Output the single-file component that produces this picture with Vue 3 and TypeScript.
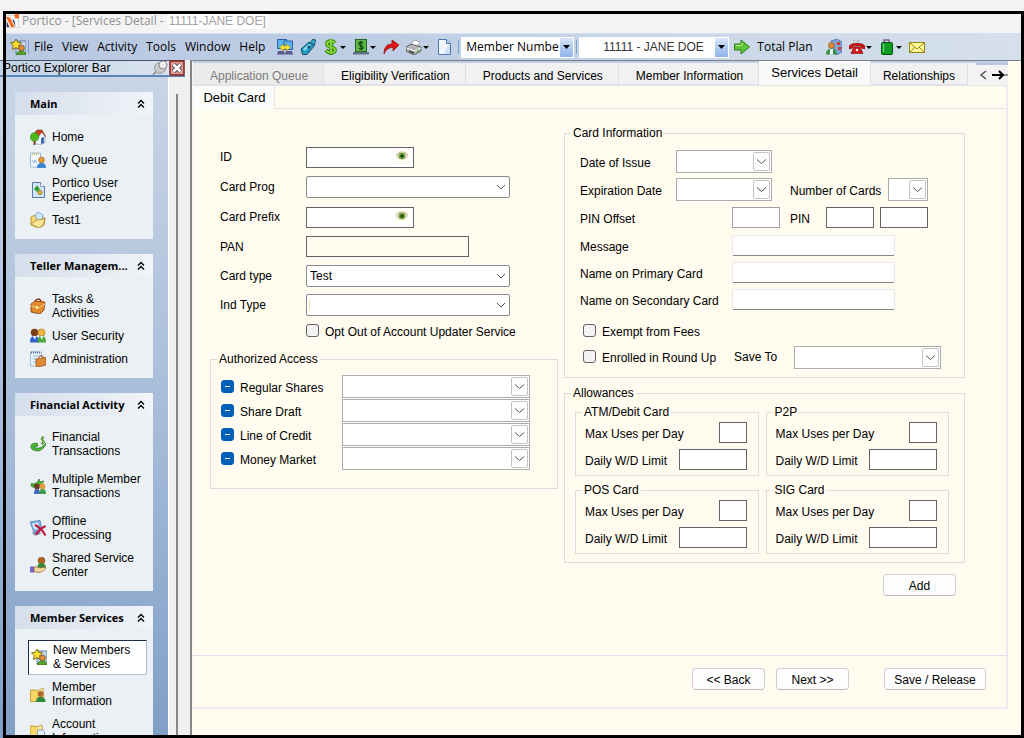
<script setup lang="ts">
import { ref } from 'vue'

interface NavItem {
  label: string
  icon: string
  active?: boolean
}
interface NavGroup {
  title: string
  items: NavItem[]
  roomy?: boolean
}

const icons: Record<string, string> = {
  app: '<rect x="1" y="2" width="14" height="14" fill="#fff" stroke="#ccc"/><path d="M1 3l5 1 5 11H7z" fill="#f26b21"/><path d="M2 15V8l3 7zM8 5l3 3 1 7z" fill="#20365e"/><rect x="11" width="5" height="5" fill="#f26b21"/>',
  star: '<path d="M7 2h9v13H6V9z" fill="#c3dcf3" stroke="#5f7a9f"/><path d="M6 0l1.700 3.300 3.800.500-2.700 2.700.600 4L6 8.600 2.600 10.500l.6-4L.5 3.800l3.800-.5z" fill="#ffe02e" stroke="#6f5d0b" stroke-width=".9"/><circle cx="11.500" cy="9" r="2.900" fill="#e08c3c" stroke="#6a4318" stroke-width=".7"/><path d="M6.500 16c0-3 2.500-4 5-4s4.500 1 4.500 4z" fill="#58a52c" stroke="#2c6414" stroke-width=".7"/>',
  screens: '<rect x=".5" y=".5" width="9" height="9" fill="#58b4f0" stroke="#2d62a5"/><rect x="7" y="2" width="8.500" height="8.500" fill="#58b4f0" stroke="#2d62a5"/><path d="M1 12h6l1 3.500H0zM9 12h6l1 3.500H8z" fill="#565a8c"/><path d="M2.500 8.500l4-3.500v2h3V5l4 3.500-4 3.500v-2h-3v2z" fill="#ffe138" stroke="#a48a14" stroke-width=".6"/>',
  tag: '<path d="M1 10l8-7 5.500 3.500L7 15.500H2.500z" fill="#239ac0" stroke="#10516d"/><path d="M3 10l6-5 2 1-6 6z" fill="#8ad8ee"/><path d="M10 4l3-4 2.500 1-1 5z" fill="#3aa8c8" stroke="#14536c"/><circle cx="9" cy="8" r="1.500" fill="#154e66"/>',
  dollar: '<path d="M12 4C9 1 4 2 4 5c0 4 8 2 8 6 0 3-6 4-9 0M8 0v16" fill="none" stroke="#3b8815" stroke-width="3.800"/><path d="M12 4C9 1 4 2 4 5c0 4 8 2 8 6 0 3-6 4-9 0M8 0v15" fill="none" stroke="#86d63c" stroke-width="1.800"/>',
  cash: '<rect x="2.500" y=".5" width="11" height="12" fill="#5eb746" stroke="#236522"/><path d="M0 13h16v2.500H0z" fill="#5d7480"/><path d="M10 4C8.500 2.500 6 3 6 5s4 1.500 4 3.500S7 10.500 5.800 9M8 2v9" fill="none" stroke="#0c3d0e" stroke-width="1.200"/>',
  redo: '<path d="M1 15C1 8 4 5 9 5V1l7 5-6 6V8.500C6 8.500 3 10 1 15z" fill="#e01616" stroke="#8c0b0b" stroke-width=".7"/>',
  printer: '<path d="M5 6l3-5 6 2-3 5z" fill="#fff" stroke="#888" stroke-width=".7"/><path d="M0 8l5-3 10 3v4l-7 4-8-4z" fill="#b5b5b5" stroke="#484848" stroke-width=".8"/><path d="M1 9l7 3 7-3" fill="none" stroke="#fff"/><path d="M3 11l5 2v2l-5-2z" fill="#4c4c4c"/><circle cx="12" cy="11.500" r="1" fill="#4fbf39"/>',
  page: '<path d="M2.500.5h8l4 4v11h-12z" fill="#f1f7ff" stroke="#4f77b5"/><path d="M10.500.5v4h4" fill="#bdd3f0" stroke="#4f77b5"/><path d="M12 6h2v9H8z" fill="#cfe0f7"/>',
  go: '<path d="M.5 5H7V1l8.500 7L7 15v-4H.5z" fill="#5cc534" stroke="#2c7d18"/><path d="M2 6.500h6V4" fill="none" stroke="#b6ec93"/>',
  people: '<path d="M5 2l6-2 5 3v10l-5 3-5-2z" fill="#7fa6d8" stroke="#47658e" stroke-width=".7"/><path d="M11 3h3v3h-3zM12 8h3v3h-3z" fill="#d33a2b"/><circle cx="5.500" cy="6.500" r="3" fill="#dc8a3a" stroke="#7b4c1a" stroke-width=".6"/><path d="M0 15.500c0-4 2-6 5.500-6s5.500 2 5.500 6z" fill="#3f8f45"/><path d="M4 10h3v5.500H4z" fill="#e8f2ff"/>',
  phone: '<path d="M0 8c0-5 16-5 16 0v2l-4-1V7H4v2l-4 1z" fill="#d31616" stroke="#7d0909" stroke-width=".6"/><path d="M5 8h6l3 6.500H2z" fill="#d31616" stroke="#7d0909" stroke-width=".6"/><circle cx="8" cy="11" r="1.300" fill="#fff"/><path d="M4 2l2-1M8 2l2-1" stroke="#999"/>',
  bag: '<path d="M5 4V1h5v3" fill="none" stroke="#7c5a86" stroke-width="1.500"/><rect x="2.500" y="3.500" width="11" height="12" rx="1" fill="#0d9b20" stroke="#07510f"/><path d="M4.500 5v8" stroke="#5bd068" stroke-width="1.500"/>',
  mail: '<rect x=".5" y="3.500" width="15" height="10" fill="#fff799" stroke="#96880c"/><path d="M1 4l7 6 7-6M1 13l5-5M15 13l-5-5" fill="none" stroke="#96880c"/>',
  home: '<path d="M4 8l6-7 5 6v7l-6 2-4-2z" fill="#eef4fb" stroke="#8391a8" stroke-width=".6"/><path d="M3 6l4-5h5l4 7-4-5-4 5z" fill="#c8431e" stroke="#762510" stroke-width=".5"/><path d="M11 9l3-1v6l-3 1z" fill="#3d6fc0"/><circle cx="4.500" cy="8" r="4.300" fill="#4fb81d" stroke="#2c7a10" stroke-width=".6"/><path d="M3.500 12h2v4h-2z" fill="#7a4c1c"/>',
  queue: '<path d="M.5 1h10v14H.5z" fill="#f3f8ff" stroke="#90a9cc" stroke-width=".8"/><path d="M2 2h8" stroke="#d6c16c" stroke-width="2" stroke-dasharray="1 1"/><path d="M2 8l2 3 1-3 2 3" fill="none" stroke="#8bb3e0"/><circle cx="11.500" cy="8" r="3" fill="#e59a3a" stroke="#9b5f17" stroke-width=".5"/><path d="M7 16c0-4 2-5 4.500-5s4.500 1 4.500 5z" fill="#3e86d4"/>',
  portal: '<path d="M2.500.5h8l4 4v11h-12z" fill="#d5e6fa" stroke="#5778a8"/><path d="M10.500.5v4h4" fill="#fff" stroke="#5778a8" stroke-width=".7"/><path d="M4 7l3-3.500 3 3.500-3 3z" fill="#2f9e2a"/><circle cx="10" cy="10.500" r="2.200" fill="#d7b13a" stroke="#7e6316" stroke-width=".6"/>',
  folder: '<path d="M1 5l4-2 1 2 9 1-1 7-5 3-8-3z" fill="#f8d873" stroke="#a9831c" stroke-width=".8"/><path d="M5 4l3-4 5 3-1 5-4 2z" fill="#cfe5f8" stroke="#678fb8" stroke-width=".7"/><path d="M1 12l6-4 8-1-2 6-4 3z" fill="#fbe79a" stroke="#a9831c" stroke-width=".7"/>',
  briefcase: '<path d="M5 5c0-5 6-5 6-1" fill="none" stroke="#8b2f15" stroke-width="1.500"/><path d="M1 6l4-3 10 1-1 8-4 4-9-2z" fill="#e08a2c" stroke="#7d3d0e" stroke-width=".8"/><path d="M1 8l8 2 6-4" fill="none" stroke="#fbd08a"/><path d="M6 8h2v3H6z" fill="#ffe9a8"/>',
  users: '<circle cx="4.500" cy="4.500" r="3.700" fill="#7a3d16"/><path d="M0 14.500c0-5 2-6.500 4.500-6.500S9 9.500 9 14.500z" fill="#2e5fd0"/><circle cx="11.500" cy="4.500" r="3.600" fill="#f0b640" stroke="#a36a14" stroke-width=".6"/><path d="M7.500 14.500c0-5 1.500-6.500 4-6.500s4.500 1.500 4.500 6.500z" fill="#48a838"/><path d="M3 8h3l-1 4zM10 8h3l-1 4z" fill="#fff"/>',
  admin: '<path d="M.5 1h11v14H.5z" fill="#eef6fd" stroke="#92aac6" stroke-width=".8"/><path d="M1 1.500h10" stroke="#57799d" stroke-width="2" stroke-dasharray="1 1"/><path d="M3 5h5M3 8h3M3 11h3" stroke="#89b6de"/><path d="M8.500 7c0-3 5-3 5 0" fill="none" stroke="#8b3c15"/><path d="M6 8l10-1.500v7.500l-8 2-2-1z" fill="#de8a36" stroke="#8d4a15" stroke-width=".7"/>',
  finance: '<path d="M2 8c-4 4 3 9 9 6 3-2 5-5 5-7-3 4-8 7-12 4l4-1-1-3z" fill="#4fb537" stroke="#207518" stroke-width=".7"/><path d="M14.500 2.200C13 1 11 1.500 11 3s3.500 1 3.500 3-2.500 2-3.800.7M12.700 0v9" fill="none" stroke="#4b8a17"/>',
  multi: '<path d="M2 5c-3 3 1 5 3 4M2 6C6 6 8 4 9 1l1 3 4-1C11 8 6 9 3 7z" fill="#4fb537" stroke="#207518" stroke-width=".7"/><circle cx="7" cy="8.500" r="2.900" fill="#6e3b1d"/><circle cx="12.500" cy="8.500" r="2.900" fill="#e59a3a"/><path d="M4 16c0-4 1-5 3-5s3 1 3 5z" fill="#3e6bbd"/><path d="M9.500 16c0-4 1-5 3-5s3.500 1 3.500 5z" fill="#3e9b4a"/>',
  offline: '<path d="M0 2l10-1.500 2 9.500-8 2z" fill="#86b7e6" stroke="#4777ae" stroke-width=".8"/><path d="M2 3.500l6-1 1 6-5 1z" fill="#cfe6fa"/><path d="M2 12l7-2 2 4-7 1.500z" fill="#7f93bd"/><path d="M5 5c4 2 8 6 10.500 10.500M15.500 6c-4 2-8 6-9.500 9" stroke="#c0183a" stroke-width="2" fill="none"/>',
  shared: '<circle cx="11.500" cy="3.700" r="3.400" fill="#b3651e" stroke="#6b370c" stroke-width=".6"/><path d="M7 11c0-3 2-5 4.500-5s4.500 2 4.500 5z" fill="#2f8b3b"/><path d="M0 9.500h4v6H0z" fill="#7b62d3"/><path d="M4 10h4l2 1 6-1c-1 4-5 5.500-8 5.500l-4-1z" fill="#f6d6a0" stroke="#8a6025" stroke-width=".7"/>',
  member: '<path d="M.5 4h6l1 1h5v10.500H.5z" fill="#f7d867" stroke="#b28e20" stroke-width=".8"/><path d="M7 5l6-3 1 10" fill="#fbeaa5" stroke="#b28e20" stroke-width=".7"/><circle cx="10.500" cy="8" r="2.900" fill="#b06a2c"/><path d="M6 16c0-4 2-5 4.500-5s5 1 5 5z" fill="#2f8b3b"/>',
  account: '<path d="M0 3h5l1 1h5v11H0z" fill="#f7d867" stroke="#b28e20" stroke-width=".8"/><path d="M6 4l6-2 1 10" fill="#fbeaa5" stroke="#b28e20" stroke-width=".7"/><path d="M7.500 7h5l2 2v7h-7z" fill="#e5f0fc" stroke="#6a8fc0" stroke-width=".8"/>',
}

const menus = ['File', 'View', 'Activity', 'Tools', 'Window', 'Help']

const groups: NavGroup[] = [
  {
    title: 'Main',
    items: [
      { label: 'Home', icon: 'home' },
      { label: 'My Queue', icon: 'queue' },
      { label: 'Portico User Experience', icon: 'portal' },
      { label: 'Test1', icon: 'folder' },
    ],
  },
  {
    title: 'Teller Managem...',
    items: [
      { label: 'Tasks & Activities', icon: 'briefcase' },
      { label: 'User Security', icon: 'users' },
      { label: 'Administration', icon: 'admin' },
    ],
  },
  {
    title: 'Financial Activity',
    roomy: true,
    items: [
      { label: 'Financial Transactions', icon: 'finance' },
      { label: 'Multiple Member Transactions', icon: 'multi' },
      { label: 'Offline Processing', icon: 'offline' },
      { label: 'Shared Service Center', icon: 'shared' },
    ],
  },
  {
    title: 'Member Services',
    items: [
      { label: 'New Members & Services', icon: 'star', active: true },
      { label: 'Member Information', icon: 'member' },
      { label: 'Account Information', icon: 'account' },
    ],
  },
]

const tabs = [
  'Application Queue',
  'Eligibility Verification',
  'Products and Services',
  'Member Information',
  'Services Detail',
  'Relationships',
]
const activeTab = ref('Services Detail')

const accessRows = ['Regular Shares', 'Share Draft', 'Line of Credit', 'Money Market']
const allowances = ['ATM/Debit Card', 'P2P', 'POS Card', 'SIG Card']
const longFields = ['Message', 'Name on Primary Card', 'Name on Secondary Card']

const id = (text: string) => text.toLowerCase().replace(/[^a-z0-9]+/g, '-')
</script>

<template>
  <div class="window">
    <header class="titlebar">
      <svg class="app-icon" viewBox="0 0 16 16" v-html="icons.app"></svg>
      <span>Portico - [Services Detail -</span>
      <span class="title-member">11111-JANE DOE]</span>
    </header>

    <nav class="toolbar" aria-label="Toolbar">
      <svg class="icon" viewBox="0 0 16 16" v-html="icons.star"></svg>
      <i class="sep"></i>
      <div class="menus">
        <button v-for="m in menus" :key="m" type="button" class="menu">{{ m }}</button>
      </div>
      <div class="tools">
        <button type="button" class="tool" aria-label="Screens"><svg viewBox="0 0 16 16" v-html="icons.screens"></svg></button>
        <button type="button" class="tool" aria-label="Tag"><svg viewBox="0 0 16 16" v-html="icons.tag"></svg></button>
        <button type="button" class="tool drop" aria-label="Funds"><svg viewBox="0 0 16 16" v-html="icons.dollar"></svg></button>
        <button type="button" class="tool drop" aria-label="Cash"><svg viewBox="0 0 16 16" v-html="icons.cash"></svg></button>
        <button type="button" class="tool" aria-label="Forward"><svg viewBox="0 0 16 16" v-html="icons.redo"></svg></button>
        <button type="button" class="tool drop" aria-label="Print"><svg viewBox="0 0 16 16" v-html="icons.printer"></svg></button>
        <button type="button" class="tool" aria-label="New page"><svg viewBox="0 0 16 16" v-html="icons.page"></svg></button>
      </div>
      <i class="sep"></i>
      <select class="bar-select by" aria-label="Search by"><option>Member Numbe</option></select>
      <i class="sep"></i>
      <select class="bar-select who" aria-label="Member"><option>11111 - JANE DOE</option></select>
      <button type="button" class="plan">
        <svg class="icon" viewBox="0 0 16 16" v-html="icons.go"></svg>Total Plan
      </button>
      <div class="tools">
        <button type="button" class="tool" aria-label="People"><svg viewBox="0 0 16 16" v-html="icons.people"></svg></button>
        <button type="button" class="tool drop" aria-label="Phone"><svg viewBox="0 0 16 16" v-html="icons.phone"></svg></button>
        <button type="button" class="tool drop" aria-label="Clipboard"><svg viewBox="0 0 16 16" v-html="icons.bag"></svg></button>
        <button type="button" class="tool" aria-label="Mail"><svg viewBox="0 0 16 16" v-html="icons.mail"></svg></button>
      </div>
    </nav>

    <div class="body">
      <aside class="explorer">
        <div class="explorer-head">
          <span>Portico Explorer Bar</span>
          <button type="button" class="pin" aria-label="Pin">
            <svg viewBox="0 0 16 16">
              <path d="M1 15l5-5" stroke="#999" stroke-width="2" />
              <circle cx="8" cy="8" r="5.500" fill="#c9c9c9" stroke="#999" />
              <circle cx="11" cy="5" r="4" fill="#ececec" stroke="#8a8a8a" />
              <path d="M9 4c1-2 3-2 4-1" stroke="#fff" fill="none" />
            </svg>
          </button>
          <button type="button" class="close" aria-label="Close">
            <svg viewBox="0 0 16 16">
              <rect x="1" y="1" width="14" height="14" rx="1" fill="#dd9a94" stroke="#8c2020" stroke-width="1.500" />
              <path d="M4.500 4.500l7 7M11.500 4.500l-7 7" stroke="#4a4a4a" stroke-width="4.500" />
              <path d="M4.500 4.500l7 7M11.500 4.500l-7 7" stroke="#fff" stroke-width="2.500" />
            </svg>
          </button>
        </div>
        <div class="explorer-main">
          <div class="groups">
            <section v-for="g in groups" :key="g.title" class="group">
              <button type="button" class="group-head">
                <span>{{ g.title }}</span>
                <svg viewBox="0 0 8 10"><path d="M1 4.500l3-3 3 3M1 8.500l3-3 3 3" fill="none" stroke="#000" stroke-width="1.400" /></svg>
              </button>
              <ul :class="{ roomy: g.roomy }">
                <li v-for="it in g.items" :key="it.label" :class="{ active: it.active }">
                  <a href="#"><svg class="icon" viewBox="0 0 16 16" v-html="icons[it.icon]"></svg><span>{{ it.label }}</span></a>
                </li>
              </ul>
            </section>
          </div>
          <div class="gutter"></div>
        </div>
      </aside>

      <main class="work">
        <div class="sheet">
          <div class="tabs" role="tablist">
            <button
              v-for="t in tabs"
              :key="t"
              type="button"
              role="tab"
              class="tab"
              :class="{ on: t === activeTab, dim: t === 'Application Queue', slim: t === 'Relationships' }"
              :aria-selected="t === activeTab"
              @click="activeTab = t"
            >{{ t }}</button>
            <div class="tab-nav">
              <button type="button" aria-label="Previous tabs">
                <svg viewBox="0 0 10 10"><path d="M8 1L3 5l5 4" fill="none" stroke="#555" stroke-width="1.600" /></svg>
              </button>
              <button type="button" class="wide" aria-label="Next tabs">
                <svg viewBox="0 0 16 10"><path d="M0 5h11" stroke="#000" stroke-width="2" /><path d="M11 5h5" stroke="#777" stroke-width="1.500" /><path d="M7 1l4 4-4 4" fill="none" stroke="#000" stroke-width="2" /></svg>
              </button>
            </div>
          </div>
          <div class="subtabs" role="tablist">
            <button type="button" role="tab" class="subtab" aria-selected="true">Debit Card</button>
          </div>

          <form class="panel" @submit.prevent>
            <div class="cols">
              <div class="left">
                <div class="card-form">
                  <div class="row tall">
                    <label for="cid">ID</label>
                    <span class="with-eye"><input id="cid" type="text" class="dark" /><svg viewBox="0 0 14 12"><path d="M1 6c3-5 9-5 12 0-3 5-9 5-12 0z" fill="#ddd5c6" /><path d="M1 5c3-4 9-4 12 0" fill="none" stroke="#cbb597" /><circle cx="7" cy="6" r="3.300" fill="#6aa52e" /><circle cx="7" cy="6" r="1.500" fill="#16320c" /></svg></span>
                  </div>
                  <div class="row tall"><label for="prog">Card Prog</label><select id="prog" class="modern"></select></div>
                  <div class="row tall">
                    <label for="prefix">Card Prefix</label>
                    <span class="with-eye"><input id="prefix" type="text" class="dark" /><svg viewBox="0 0 14 12"><path d="M1 6c3-5 9-5 12 0-3 5-9 5-12 0z" fill="#ddd5c6" /><path d="M1 5c3-4 9-4 12 0" fill="none" stroke="#cbb597" /><circle cx="7" cy="6" r="3.300" fill="#6aa52e" /><circle cx="7" cy="6" r="1.500" fill="#16320c" /></svg></span>
                  </div>
                  <div class="row"><label for="pan">PAN</label><input id="pan" type="text" class="dark pan" readonly /></div>
                  <div class="row"><label for="ctype">Card type</label><select id="ctype" class="modern"><option>Test</option></select></div>
                  <div class="row"><label for="itype">Ind Type</label><select id="itype" class="modern caret"></select></div>
                  <label class="check opt"><input type="checkbox" />Opt Out of Account Updater Service</label>
                </div>

                <fieldset class="access">
                  <legend>Authorized Access</legend>
                  <div v-for="a in accessRows" :key="a" class="access-row">
                    <label class="check"><input type="checkbox" :indeterminate="true" />{{ a }}</label>
                    <select class="boxed" :aria-label="a + ' account'"></select>
                  </div>
                </fieldset>
              </div>

              <div class="right">
                <fieldset class="info">
                  <legend>Card Information</legend>
                  <div class="line">
                    <label for="issue" class="near">Date of Issue</label><select id="issue" class="boxed date"></select>
                  </div>
                  <div class="line">
                    <label for="exp" class="near">Expiration Date</label><select id="exp" class="boxed date"></select>
                    <label for="num" class="num">Number of Cards</label><select id="num" class="boxed count"></select>
                  </div>
                  <div class="line">
                    <label for="offset" class="far">PIN Offset</label><input id="offset" type="text" class="pin-box soft" />
                    <label for="pin1" class="pin-label">PIN</label><input id="pin1" type="text" class="pin-box dark" />
                    <input type="text" class="pin-box dark second" aria-label="Confirm PIN" />
                  </div>
                  <div v-for="f in longFields" :key="f" class="line">
                    <label :for="id(f)" class="far">{{ f }}</label><input :id="id(f)" type="text" class="flat" />
                  </div>
                  <div class="checks">
                    <div class="check-line"><label class="check"><input type="checkbox" />Exempt from Fees</label></div>
                    <div class="check-line">
                      <label class="check"><input type="checkbox" />Enrolled in Round Up</label>
                      <label for="save" class="save-label">Save To</label><select id="save" class="boxed save"></select>
                    </div>
                  </div>
                </fieldset>

                <fieldset class="allow">
                  <legend>Allowances</legend>
                  <div class="allow-grid">
                    <fieldset v-for="a in allowances" :key="a" class="limit">
                      <legend>{{ a }}</legend>
                      <div class="limit-row"><label :for="id(a) + '-max'">Max Uses per Day</label><input :id="id(a) + '-max'" type="text" class="dark uses" /></div>
                      <div class="limit-row"><label :for="id(a) + '-wd'">Daily W/D Limit</label><input :id="id(a) + '-wd'" type="text" class="dark amount" /></div>
                    </fieldset>
                  </div>
                </fieldset>
                <div class="add"><button type="button" class="btn">Add</button></div>
              </div>
            </div>
            <footer class="actions">
              <button type="button" class="btn">&lt;&lt; Back</button>
              <button type="button" class="btn">Next &gt;&gt;</button>
              <button type="button" class="btn save-btn">Save / Release</button>
            </footer>
          </form>
        </div>
      </main>
    </div>
  </div>
</template>

<style>
body {
  margin: 0;
}
</style>

<style scoped>
* {
  box-sizing: border-box;
}
.window {
  position: relative;
  display: flex;
  flex-direction: column;
  height: 100vh;
  overflow: hidden;
  padding-top: 13px;
  background: #f3f3f3;
  color: #000;
  font: 12px/14px "Liberation Sans", Arial, sans-serif;
}
.window::after {
  content: "";
  position: absolute;
  inset: 11px 0 0 3px;
  border: 3px solid #000;
  pointer-events: none;
}
button,
select,
input {
  font: inherit;
  color: inherit;
  margin: 0;
}
button {
  border: 0;
  padding: 0;
  background: none;
}
svg {
  display: block;
}
.icon {
  flex: none;
  width: 16px;
  height: 16px;
}

.titlebar {
  flex: none;
  display: flex;
  align-items: center;
  height: 20px;
  padding: 0 0 4px 5px;
  color: #929292;
  font: 12px/16px "Open Sans", "Noto Sans", sans-serif;
}
.app-icon {
  width: 14px;
  height: 14px;
  margin-right: 3px;
}
.title-member {
  margin-left: 3px;
  padding: 0 2px;
  border-radius: 4px;
  background: #fdfdfd;
  color: #a3a3a3;
  font-family: "Liberation Sans", Arial, sans-serif;
}

.toolbar {
  flex: none;
  display: flex;
  align-items: center;
  height: 27px;
  margin-left: 3px;
  padding-left: 7px;
  border-top: 1px solid #d5e0f2;
  background: linear-gradient(90deg, #b9c9e2, #bccce3 30%, #d6e0ec);
  font: 12px/16px "Open Sans", "Noto Sans", sans-serif;
  white-space: nowrap;
}
.sep {
  flex: none;
  width: 1px;
  height: 14px;
  margin: 0 2px;
  background: #7f9fd4;
}
.menus {
  display: flex;
  gap: 9px;
  margin: 0 12px 0 3px;
}
.tools {
  display: flex;
  align-items: center;
  gap: 7px;
  margin-right: 4px;
}
.tool {
  display: flex;
  align-items: center;
}
.tool svg {
  width: 16px;
  height: 16px;
}
.tool.drop::after {
  content: "";
  margin-left: 1px;
  border: 3px solid transparent;
  border-top-color: #000;
  border-bottom: 0;
}
.bar-select {
  appearance: none;
  flex: none;
  height: 21px;
  border: 1px solid #fff;
  border-radius: 0;
  background:
    url("data:image/svg+xml,%3Csvg xmlns='http://www.w3.org/2000/svg' width='13' height='21'%3E%3Cpath d='M3 8h7l-3.500 4z'/%3E%3C/svg%3E") right center no-repeat,
    linear-gradient(#d9e6fa, #8db2ea) right / 13px 100% no-repeat,
    #fff;
}
.by {
  width: 113px;
  padding: 0 14px 0 4px;
}
.who {
  width: 150px;
  padding: 0 14px 0 23px;
  color: #333;
  font-family: "Liberation Sans", Arial, sans-serif;
}
.plan {
  display: flex;
  gap: 7px;
  margin: 0 13px 0 5px;
}

.body {
  flex: 1;
  display: flex;
  min-height: 0;
}
.explorer {
  flex: none;
  display: flex;
  flex-direction: column;
  width: 190px;
  background: #f0f0f0;
}
.explorer-head {
  flex: none;
  display: flex;
  align-items: center;
  width: 185px;
  height: 17px;
  padding-left: 3px;
  border-top: 1px solid #44546c;
  border-bottom: 2px solid #5a86bd;
  background: linear-gradient(90deg, #c3d2e6, #dce5f0);
}
.explorer-head span {
  flex: 1;
}
.pin,
.close {
  width: 16px;
  height: 16px;
}
.pin {
  margin-right: 1px;
}
.explorer-main {
  flex: 1;
  display: flex;
  min-height: 0;
}
.groups {
  width: 169px;
  padding: 15px 15px 0;
  overflow: hidden;
  border-right: 1px solid #fff;
  background: linear-gradient(#c9d5e6, #a8bdda 50%, #809fc7);
}
.gutter {
  width: 9px;
  margin-top: 17px;
  border-right: 2px solid #858585;
}
.group {
  margin-bottom: 15px;
  background: #eaf0f4;
}
.group-head {
  display: flex;
  align-items: center;
  justify-content: space-between;
  width: 100%;
  height: 23px;
  padding: 0 8px 0 15px;
  background: linear-gradient(90deg, #d5deec, #f1f4f8);
  font: bold 11px/14px "Open Sans", "Noto Sans", sans-serif;
  white-space: nowrap;
}
.group-head svg {
  width: 8px;
  height: 10px;
}
.group ul {
  display: flex;
  flex-direction: column;
  gap: 9px;
  margin: 0;
  padding: 15px 10px 12px 15px;
  list-style: none;
}
.group li a {
  display: flex;
  align-items: center;
  gap: 6px;
  color: #000;
  text-decoration: none;
}
.group li .icon {
  margin: -1px 0;
}
.group ul.roomy {
  padding-top: 14px;
}
.group .roomy li:nth-child(-n + 2) {
  margin-bottom: 5px;
}
.group li.active {
  margin: -4px -4px -4px -2px;
  padding: 2px 8px 3px 2px;
  border: 1px solid #a9bdd9;
  border-top-color: #1d2e4c;
  border-left-color: #1d2e4c;
  background: #fff;
}

.work {
  flex: 1;
  min-width: 0;
  padding: 0 16px 29px 0;
  border-top: 1px solid #7b7f88;
  border-left: 2px solid #858585;
  background: #fffbef;
}
.sheet {
  display: flex;
  flex-direction: column;
  height: 100%;
  border-left: 1px solid #f4f4f4;
}
.tabs {
  flex: none;
  display: flex;
  align-items: flex-end;
  height: 24px;
  border-top: 2px solid #c0cee3;
  background: #f3f3f3;
}
.tab {
  height: 22px;
  padding: 5px 15px 0 17px;
  border-right: 1px solid #dfdfe3;
  border-bottom: 1px solid #e2e2e6;
  background: #f1f1f1;
  white-space: nowrap;
}
.tab.dim {
  background: #ebebeb;
  color: #7a7a7a;
}
.tab.on {
  height: 24px;
  padding: 0 12px;
  border-bottom-color: #fafafa;
  background: #fafafa;
  font-size: 13px;
}
.tab.slim {
  padding: 5px 12px 0;
}
.tab-nav {
  display: flex;
  align-items: center;
  height: 22px;
  margin-left: auto;
  width: 32px;
  border-top: 2px solid #b8c8e0;
}
.tab-nav svg {
  width: 10px;
  height: 10px;
}
.tab-nav button {
  margin-left: 2px;
}
.tab-nav .wide svg {
  width: 16px;
}
.tab-nav .wide {
  margin-left: 4px;
}
.subtabs {
  flex: none;
  height: 24px;
  border-top: 1px solid #e3e3e8;
  border-right: 2px solid #eeeef2;
  display: flex;
}
.subtabs::after {
  content: "";
  flex: 1;
  border-bottom: 1px solid #e3e3e8;
}
.subtab {
  width: 82px;
  padding: 0 0 0 2px;
  border-right: 1px solid #e3e3e8;
  background: #fbfbfa;
  font-size: 13px;
}

.panel {
  flex: 1;
  display: flex;
  flex-direction: column;
  min-height: 0;
  border-right: 2px solid #eaeaf0;
  border-bottom: 2px solid #eaeaf0;
}
.cols {
  flex: 1;
  display: grid;
  grid-template-columns: 348fr 401fr;
  gap: 6px;
  align-items: start;
  padding: 17px 41px 0 17px;
}
fieldset {
  min-width: 0;
  margin: 0;
  border: 1px solid #dcdcde;
}
legend {
  padding: 0 2px;
  line-height: 14px;
}

input[type="text"] {
  height: 21px;
  padding: 0 3px;
  border: 1px solid #a0a0a4;
  border-radius: 0;
  background: #fff;
}
input.dark[type="text"] {
  border-color: #636366;
}
input.flat[type="text"] {
  width: 163px;
  border-color: #e8e8e8;
  border-bottom-color: #868686;
  border-radius: 2px;
}
select {
  appearance: none;
  border-radius: 0;
}
.modern {
  width: 204px;
  height: 22px;
  padding: 0 20px 0 3px;
  border: 1px solid #8b8b8f;
  border-radius: 2px;
  background: url("data:image/svg+xml,%3Csvg xmlns='http://www.w3.org/2000/svg' width='10' height='6'%3E%3Cpath d='M1 1l4 4 4-4' fill='none' stroke='%23555'/%3E%3C/svg%3E") right 3px center no-repeat #fff;
}
.modern.caret {
  background-image:
    url("data:image/svg+xml,%3Csvg xmlns='http://www.w3.org/2000/svg' width='10' height='6'%3E%3Cpath d='M1 1l4 4 4-4' fill='none' stroke='%23555'/%3E%3C/svg%3E"),
    linear-gradient(#fbdca6, #fbdca6);
  background-position: right 3px center, left 2px center;
  background-size: auto, 1px 10px;
}
.boxed {
  height: 23px;
  padding: 0 20px 0 3px;
  border: 1px solid #acacb0;
  background: url("data:image/svg+xml,%3Csvg xmlns='http://www.w3.org/2000/svg' width='17' height='19'%3E%3Crect x='.5' y='.5' width='16' height='18' rx='1.500' fill='%23fdfdfd' stroke='%23c4c4c4'/%3E%3Cpath d='M4 7.500l4.500 4 4.500-4' fill='none' stroke='%23555'/%3E%3C/svg%3E") right 1px center no-repeat #fff;
}
.check {
  display: flex;
  align-items: center;
  gap: 6px;
  padding-top: 1px;
  white-space: nowrap;
}
.check input {
  appearance: none;
  display: flex;
  align-items: center;
  justify-content: center;
  flex: none;
  width: 13px;
  height: 13px;
  margin-bottom: 2px;
  border: 1px solid #626266;
  border-radius: 3px;
  background: #f3f3f3;
}
.check input:indeterminate {
  border-color: #005fb8;
  background: #005fb8;
}
.check input:indeterminate::before {
  content: "";
  width: 5px;
  height: 1px;
  background: #fff;
}

.card-form {
  padding: 16px 0 9px 10px;
}
.row {
  display: grid;
  grid-template-columns: 86px auto;
  justify-content: start;
  align-items: center;
  height: 29px;
}
.row.tall {
  height: 30px;
}
.with-eye {
  display: grid;
  align-items: center;
  justify-items: end;
}
.with-eye > * {
  grid-area: 1 / 1;
}
.with-eye input {
  width: 108px;
}
.with-eye svg {
  width: 14px;
  height: 12px;
  margin: 0 5px 2px 0;
  background: #fffbef;
}
input.pan[type="text"] {
  width: 163px;
  background: #fffbef;
}
.opt {
  height: 24px;
  margin-left: 86px;
}

.access {
  padding: 9px 27px 17px 10px;
}
.access legend {
  margin-left: -4px;
}
.access-row {
  display: grid;
  grid-template-columns: 121px 1fr;
  height: 24px;
}
.access-row .check {
  height: 24px;
}

.info {
  padding: 7px 10px 7px 15px;
}
.info legend {
  margin-left: -9px;
}
.line {
  display: flex;
  align-items: center;
  height: 28px;
}
.line:nth-of-type(n + 5) {
  height: 27px;
}
.line label {
  flex: none;
  padding-top: 3px;
  white-space: nowrap;
}
.near {
  width: 96px;
}
.far {
  width: 152px;
}
.date {
  width: 96px;
}
.num {
  width: 98px;
  margin-left: 18px;
}
.count {
  width: 40px;
}
.pin-box {
  width: 48px;
}
.pin-label {
  width: 36px;
  margin-left: 10px;
}
.second {
  margin-left: 6px;
}
.checks {
  padding-top: 5px;
}
.check-line {
  display: flex;
  align-items: center;
  height: 26px;
}
.check-line .check {
  width: 151px;
  margin-left: 3px;
}
.save-label {
  width: 60px;
}
.save {
  width: 147px;
}

.allow {
  margin-top: 8px;
  padding: 5px 15px 8px 10px;
}
.allow > legend {
  margin-left: -4px;
}
.allow-grid {
  display: grid;
  grid-template-columns: 1fr 1fr;
  gap: 7px;
}
.limit {
  padding: 0 11px 2px 9px;
}
.limit legend {
  margin-left: -3px;
}
.limit-row {
  display: flex;
  align-items: center;
  justify-content: space-between;
  height: 27px;
}
.limit-row label {
  padding-top: 3px;
}
.uses {
  width: 28px;
}
.amount {
  width: 68px;
}
.btn {
  width: 73px;
  height: 22px;
  padding-top: 1px;
  border: 1px solid #d0d0d0;
  border-bottom-color: #bababa;
  border-radius: 4px;
  background: #fdfdfd;
}
.add {
  display: flex;
  justify-content: flex-end;
  padding: 11px 9px 0 0;
}
.actions {
  flex: none;
  display: flex;
  justify-content: flex-end;
  gap: 11px;
  height: 52px;
  padding: 12px 20px 0 0;
  border-top: 1px solid #dfe1ea;
}
.save-btn {
  width: 102px;
  margin-left: 24px;
}
</style>
